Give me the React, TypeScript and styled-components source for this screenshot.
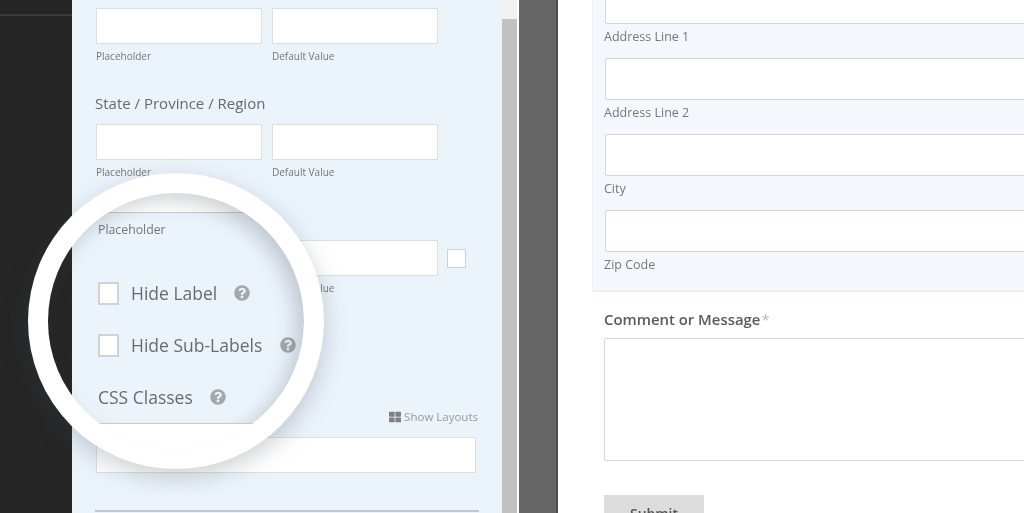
import React from 'react';
import styled, { createGlobalStyle } from 'styled-components';
import { FaQuestionCircle, FaThLarge } from 'react-icons/fa';

const GlobalStyle = createGlobalStyle`
  html, body { margin: 0; padding: 0; background: #fff; }
  body { font-family: "Open Sans", "Noto Sans", sans-serif; }
  * { box-sizing: border-box; }
`;

const Page = styled.div`
  position: relative;
  display: flex;
  width: 1024px;
  height: 513px;
  overflow: hidden;
  filter: blur(0.4px);
`;

const Sidebar = styled.div`
  flex: 0 0 72px;
  background: #262626;
`;

const SidebarRule = styled.div`
  height: 2px;
  margin-top: 14px;
  background: #3b3b3b;
`;

const Panel = styled.div`
  flex: 0 0 430px;
  padding: 0 24px;
  background: #ebf3fb;
`;

const FieldRow = styled.div<{ $top: number }>`
  display: flex;
  align-items: center;
  gap: 10px;
  margin-top: ${p => p.$top}px;
`;

const PanelInput = styled.input`
  display: block;
  width: 166px;
  height: 36px;
  border: 1px solid #dcdfe2;
  background: #fff;
  outline: none;
`;

const TinyBox = styled.div`
  width: 19px;
  height: 19px;
  margin-left: -1px;
  border: 1px solid #cfd2d5;
  background: #fff;
`;

const SubLabels = styled.div`
  display: flex;
  gap: 10px;
  margin-top: 6px;
`;

const SubLabel = styled.div`
  width: 166px;
  font-size: 10px;
  line-height: 12px;
  color: #777;
`;

const Heading = styled.div`
  margin: 31px 0 0 -1px;
  font-size: 15px;
  line-height: 20px;
  color: #6a6a6a;
`;

const LayoutsLink = styled.div`
  display: flex;
  justify-content: flex-end;
  align-items: center;
  gap: 3px;
  margin-top: 117px;
  font-size: 11.5px;
  line-height: 12px;
  color: #999;
  svg { color: #808080; }
`;

const WideInput = styled(PanelInput)`
  width: 380px;
  margin-top: 14px;
`;

const Divider = styled.div`
  height: 2px;
  margin: 37px -1px 0;
  background: #c4c8cc;
`;

const Scrollbar = styled.div`
  flex: 0 0 15px;
  display: flex;
  flex-direction: column;
  background: #f1f1f1;
`;

const ScrollThumb = styled.div`
  flex: 1;
  margin-top: 19px;
  background: #c1c1c1;
`;

const Gutter = styled.div`
  flex: 0 0 41px;
  border-left: 2px solid #fff;
  border-right: 2px solid #4e4e4e;
  background: #666;
`;

const Preview = styled.div`
  flex: 1;
  min-width: 0;
  padding-left: 34px;
  background: #fff;
`;

const AddressGroup = styled.div`
  height: 292px;
  padding: 0 0 0 12px;
  overflow: hidden;
  background: #f4f8fc;
  border-left: 1px solid #edf0f3;
  border-bottom: 2px solid #edf0f3;
`;

const AddressInput = styled.input<{ $first?: boolean }>`
  display: block;
  width: 500px;
  height: 42px;
  margin-top: ${p => (p.$first ? -18 : 0)}px;
  border: 1px solid #d4d7da;
  border-radius: 2px;
  background: #fff;
  outline: none;
`;

const AddressLabel = styled.div`
  margin: 4px 0 12px -1px;
  font-size: 12.5px;
  line-height: 18px;
  color: #777;
`;

const CommentLabel = styled.div`
  margin: 17px 0 0 12px;
  font-size: 14.9px;
  font-weight: 600;
  line-height: 20px;
  color: #5a5a5a;
`;

const Required = styled.span`
  margin-left: 1px;
  font-weight: 400;
  color: #bbb;
`;

const CommentBox = styled.textarea`
  display: block;
  width: 500px;
  height: 123px;
  margin: 9px 0 0 12px;
  border: 1px solid #d4d7da;
  border-radius: 2px;
  background: #fff;
  outline: none;
  resize: none;
`;

const SubmitButton = styled.div`
  width: 100px;
  height: 46px;
  margin: 34px 0 0 12px;
  padding-top: 9px;
  background: #dcdcdc;
  font-size: 14px;
  font-weight: 600;
  line-height: 20px;
  text-align: center;
  color: #555;
`;

const Magnifier = styled.div`
  position: absolute;
  left: 28px;
  top: 173px;
  width: 296px;
  height: 296px;
  padding: 20px;
  border-radius: 50%;
  background: #fff;
  box-shadow: 0 8px 24px rgba(60, 70, 80, 0.26);
`;

const Lens = styled.div`
  position: relative;
  display: flex;
  width: 256px;
  height: 256px;
  border-radius: 50%;
  overflow: hidden;

  &::after {
    content: '';
    position: absolute;
    inset: 0;
    border-radius: 50%;
    box-shadow: inset -7px 7px 20px rgba(60, 70, 80, 0.26);
  }
`;

const LensSpill = styled.div`
  flex: 0 0 24px;
  background: #262626;
`;

const LensPanel = styled.div`
  flex: 1;
  display: flex;
  flex-direction: column;
  background: #ebf3fb;
`;

const LensInputTop = styled.div`
  height: 20px;
  background: #fff;
  border-bottom: 1px solid #c6cbd0;
`;

const LensPlaceholder = styled.div`
  margin: 9px 0 0 26px;
  font-size: 12.3px;
  line-height: 16px;
  color: #777;
`;

const LensRow = styled.div<{ $top: number }>`
  display: flex;
  align-items: center;
  height: 24px;
  margin: ${p => p.$top}px 0 0 26px;
`;

const LensCheck = styled.div`
  width: 21px;
  height: 23px;
  margin-right: 12px;
  border: 2px solid #cfd3d6;
  background: #fff;
`;

const LensText = styled.span<{ $gap: number }>`
  margin-right: ${p => p.$gap}px;
  font-size: 17.5px;
  line-height: 24px;
  white-space: nowrap;
  color: #6b6b6b;
`;

const HelpIcon = styled(FaQuestionCircle)`
  flex: none;
  width: 16px;
  height: 16px;
  color: #a4a8ab;
`;

const LensInputBottom = styled.div`
  position: relative;
  z-index: 1;
  flex: 1;
  margin-top: 14px;
  background: #fff;
  border-top: 1px solid #c6cbd0;
`;

export default function App() {
  return (
    <>
      <GlobalStyle />
      <Page>
        <Sidebar>
          <SidebarRule />
        </Sidebar>

        <Panel>
          <FieldRow $top={8}>
            <PanelInput />
            <PanelInput />
          </FieldRow>
          <SubLabels>
            <SubLabel>Placeholder</SubLabel>
            <SubLabel>Default Value</SubLabel>
          </SubLabels>

          <Heading>State / Province / Region</Heading>
          <FieldRow $top={11}>
            <PanelInput />
            <PanelInput />
          </FieldRow>
          <SubLabels>
            <SubLabel>Placeholder</SubLabel>
            <SubLabel>Default Value</SubLabel>
          </SubLabels>

          <Heading>ZIP / Postal</Heading>
          <FieldRow $top={11}>
            <PanelInput />
            <PanelInput />
            <TinyBox />
          </FieldRow>
          <SubLabels>
            <SubLabel>Placeholder</SubLabel>
            <SubLabel>Default Value</SubLabel>
          </SubLabels>

          <LayoutsLink>
            <FaThLarge size={12} />
            Show Layouts
          </LayoutsLink>
          <WideInput />
          <Divider />
        </Panel>

        <Scrollbar>
          <ScrollThumb />
        </Scrollbar>
        <Gutter />

        <Preview>
          <AddressGroup>
            <AddressInput $first />
            <AddressLabel>Address Line 1</AddressLabel>
            <AddressInput />
            <AddressLabel>Address Line 2</AddressLabel>
            <AddressInput />
            <AddressLabel>City</AddressLabel>
            <AddressInput />
            <AddressLabel>Zip Code</AddressLabel>
          </AddressGroup>
          <CommentLabel>
            Comment or Message<Required>*</Required>
          </CommentLabel>
          <CommentBox />
          <SubmitButton>Submit</SubmitButton>
        </Preview>

        <Magnifier>
          <Lens>
            <LensSpill />
            <LensPanel>
              <LensInputTop />
              <LensPlaceholder>Placeholder</LensPlaceholder>
              <LensRow $top={43}>
                <LensCheck />
                <LensText $gap={17}>Hide Label</LensText>
                <HelpIcon />
              </LensRow>
              <LensRow $top={28}>
                <LensCheck />
                <LensText $gap={18}>Hide Sub-Labels</LensText>
                <HelpIcon />
              </LensRow>
              <LensRow $top={28}>
                <LensText $gap={17}>CSS Classes</LensText>
                <HelpIcon />
              </LensRow>
              <LensInputBottom />
            </LensPanel>
          </Lens>
        </Magnifier>
      </Page>
    </>
  );
}
